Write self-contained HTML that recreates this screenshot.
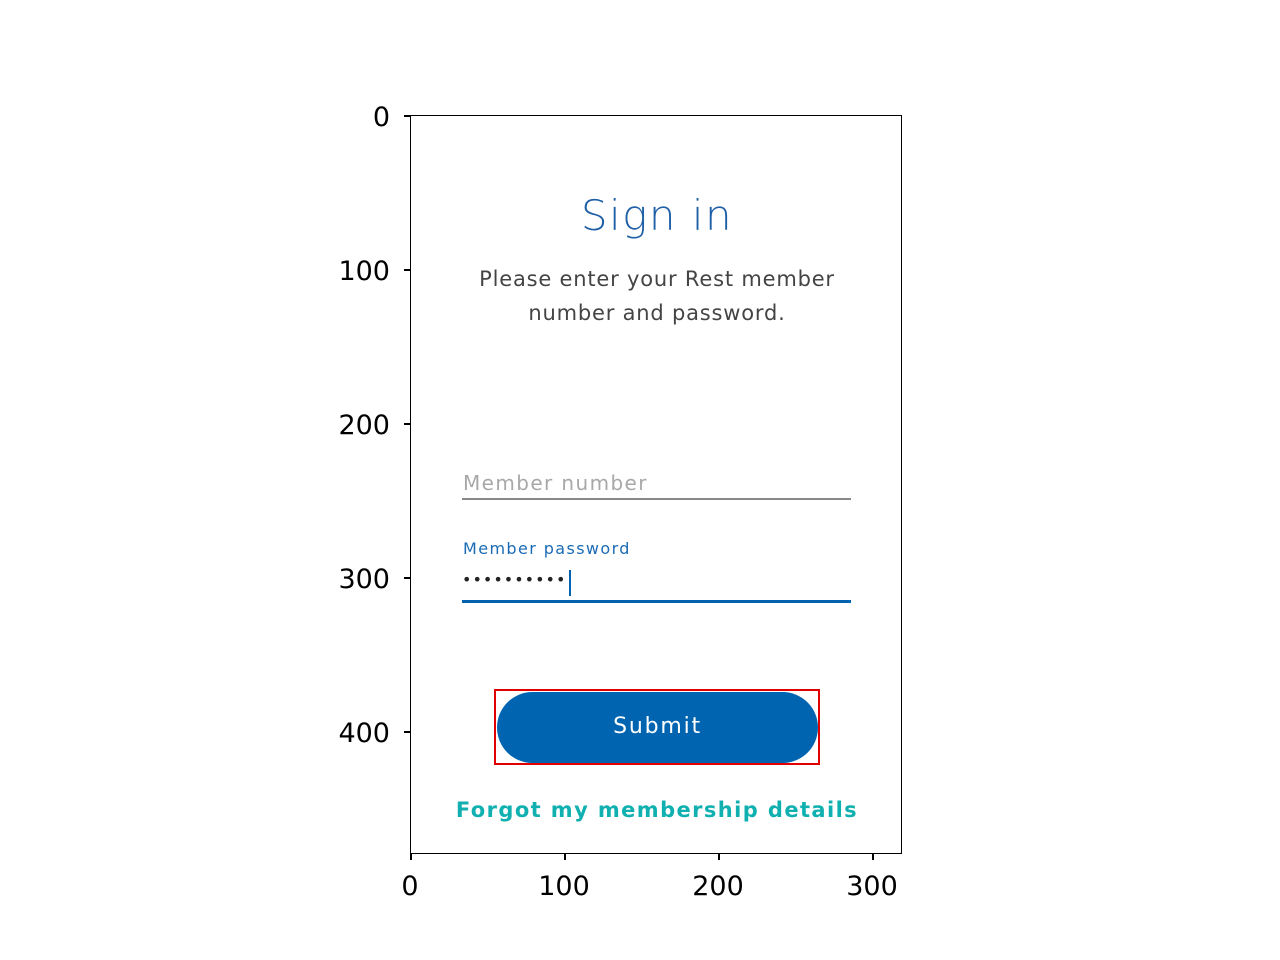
<!DOCTYPE html>
<html><head><style>
body{margin:0;width:1280px;height:960px;background:#fff;position:relative;font-family:"DejaVu Sans","Liberation Sans",sans-serif;overflow:hidden}
.a{position:absolute}
.frame{left:410px;top:115px;width:490px;height:737px;border:1.5px solid #000;}
.yt{width:6px;height:1.5px;background:#000;left:404px}
.xt{width:1.5px;height:6px;background:#000;top:854px}
.yl{font-size:27px;color:#000;text-align:right;width:80px;left:310px}
.xl{font-size:27px;color:#000;text-align:center;width:80px;top:871px}
.app{font-family:"DejaVu Sans",sans-serif}
</style></head><body>
<div class="a frame"></div>
<div class="a yt" style="top:115px"></div>
<div class="a yt" style="top:269px"></div>
<div class="a yt" style="top:423px"></div>
<div class="a yt" style="top:577px"></div>
<div class="a yt" style="top:731px"></div>
<div class="a yl" style="top:102px">0</div>
<div class="a yl" style="top:256px">100</div>
<div class="a yl" style="top:410px">200</div>
<div class="a yl" style="top:564px">300</div>
<div class="a yl" style="top:718px">400</div>
<div class="a xt" style="left:410px"></div>
<div class="a xt" style="left:564px"></div>
<div class="a xt" style="left:718px"></div>
<div class="a xt" style="left:872px"></div>
<div class="a xl" style="left:370px">0</div>
<div class="a xl" style="left:524px">100</div>
<div class="a xl" style="left:678px">200</div>
<div class="a xl" style="left:832px">300</div>

<div class="a app" style="left:410px;width:494px;top:191px;text-align:center;font-size:42px;color:#1f5fa6;font-weight:300;letter-spacing:1.5px">Sign in</div>
<div class="a app" style="left:410px;width:494px;top:262px;text-align:center;font-size:21px;line-height:34px;color:#444;letter-spacing:0.8px">Please enter your Rest member<br>number and password.</div>
<div class="a app" style="left:463px;top:471px;font-size:20px;color:#a8a8a8;letter-spacing:1.4px">Member number</div>
<div class="a" style="left:462px;top:498px;width:389px;height:2px;background:#888"></div>
<div class="a app" style="left:463px;top:539px;font-size:16px;color:#1a6bb5;letter-spacing:1.4px">Member password</div>
<div class="a app" style="left:462px;top:570px;font-size:16px;color:#222;letter-spacing:1px">••••••••••</div>
<div class="a" style="left:569px;top:570px;width:2px;height:26px;background:#0063b0"></div>
<div class="a" style="left:462px;top:600px;width:389px;height:3px;background:#0063b0"></div>
<div class="a app" style="left:497px;top:692px;width:321px;height:71px;border-radius:36px;background:#0064b0;color:#fff;font-size:22px;line-height:69px;text-align:center;letter-spacing:1.8px">Submit</div>
<div class="a" style="left:494px;top:689px;width:322px;height:72px;border:2px solid #e00000"></div>
<div class="a app" style="left:410px;width:494px;top:798px;text-align:center;font-size:21px;font-weight:bold;color:#10b0b0;letter-spacing:1.4px">Forgot my membership details</div>
</body></html>
